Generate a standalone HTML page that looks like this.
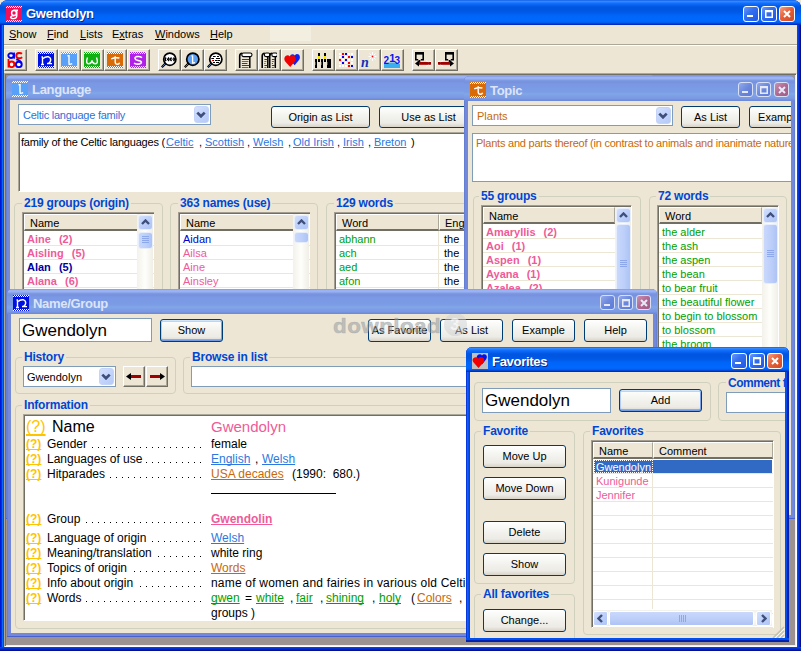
<!DOCTYPE html><html><head><meta charset="utf-8"><style>
*{margin:0;padding:0;box-sizing:border-box}
html,body{width:801px;height:651px;overflow:hidden;background:#EDE6D5;font-family:"Liberation Sans",sans-serif;font-size:11px;color:#000}
.a{position:absolute}
.t0{white-space:nowrap;line-height:1;text-decoration-skip-ink:none}
u{text-decoration:underline}

.xb{position:absolute;width:16px;height:16px;border:1px solid #fff;border-radius:3px;background:linear-gradient(135deg,#6A98F8 0,#3470F0 40%,#1E56E6 100%)}
.xb.cl{background:linear-gradient(135deg,#F4A080 0,#E5603A 45%,#D04A22 100%)}
.ib{position:absolute;width:15px;height:15px;border:1px solid #D8E0F6;border-radius:3px;background:linear-gradient(135deg,#93AAEA 0,#6B88DD 50%,#5E7BD8 100%)}
.ib.cl{background:linear-gradient(135deg,#C990B0 0,#B06A92 50%,#A05A86 100%)}
.btn{position:absolute;border:1px solid #003C74;border-radius:3px;background:linear-gradient(#FFFFFF 0,#F4F4F0 40%,#ECEBE5 80%,#D8D3C8 100%);text-align:center;font-size:12px;white-space:nowrap;line-height:1}
.grp{position:absolute;border:1px solid #D0D0BF;border-radius:4px}
.gt{position:absolute;background:#EDE6D5;color:#0046D5;font-weight:bold;font-size:12px;padding:0 2px;white-space:nowrap;line-height:1;letter-spacing:-0.2px}
.ed{position:absolute;background:#fff;border:1px solid #7F9DB9;white-space:nowrap;overflow:hidden;line-height:1}
.sk{position:absolute;background:#fff;border:1px solid;border-color:#ACA899 #fff #fff #ACA899;box-shadow:inset 1px 1px 0 #716F64;overflow:hidden;white-space:nowrap;line-height:1}
.win{position:absolute;overflow:hidden;border-radius:7px 7px 0 0}
.inner{position:absolute;left:0;top:0;width:801px;height:651px}
</style></head><body>
<div class="a" style="left:0;top:0;width:801px;height:651px;background:#0048E8;border-radius:8px 8px 0 0;overflow:hidden">
<div class="a" style="left:0px;top:0px;width:4px;height:651px;background:linear-gradient(90deg,#0018D0 0 1px,#0030E0 1px 2px,#0868FF 2px 3px,#0048E8 3px 4px)"></div>
<div class="a" style="left:797px;top:0px;width:4px;height:651px;background:linear-gradient(90deg,#0048F0 0 1px,#0038E0 1px 2px,#0020B8 2px 3px,#000C90 3px 4px)"></div>
<div class="a" style="left:0px;top:647px;width:801px;height:4px;background:linear-gradient(#0040F0 0 1px,#0030D8 1px 2px,#0020B8 2px 3px,#001090 3px 4px)"></div>
<div class="a" style="left:0px;top:0px;width:801px;height:25px;background:linear-gradient(#0050E0 0px,#3C8AFF 1px,#2A84FF 2px,#1272FF 3px,#0A62F2 5px,#0056E0 7px,#0056E0 10px,#005CEC 13px,#0066FA 16px,#0068FF 21px,#005AE8 23px,#0030C4 24px,#0028C0 25px)"></div>
<div class="a" style="left:4px;top:25px;width:793px;height:622px;background:#EDE6D5"></div>
</div>
<svg class="a" style="left:6px;top:6px" width="16" height="16" viewBox="0 0 16 16"><rect width="16" height="16" fill="#F0105A"/><g shape-rendering="crispEdges"><rect x="0" y="1" width="1" height="1" fill="#fff"/><rect x="0" y="15" width="1" height="1" fill="#fff"/><rect x="1" y="0" width="1" height="1" fill="#fff"/><rect x="1" y="14" width="1" height="1" fill="#fff"/><rect x="2" y="1" width="1" height="1" fill="#fff"/><rect x="2" y="15" width="1" height="1" fill="#fff"/><rect x="3" y="0" width="1" height="1" fill="#fff"/><rect x="3" y="14" width="1" height="1" fill="#fff"/><rect x="4" y="1" width="1" height="1" fill="#fff"/><rect x="4" y="15" width="1" height="1" fill="#fff"/><rect x="5" y="0" width="1" height="1" fill="#fff"/><rect x="5" y="14" width="1" height="1" fill="#fff"/><rect x="6" y="1" width="1" height="1" fill="#fff"/><rect x="6" y="15" width="1" height="1" fill="#fff"/><rect x="7" y="0" width="1" height="1" fill="#fff"/><rect x="7" y="14" width="1" height="1" fill="#fff"/><rect x="8" y="1" width="1" height="1" fill="#fff"/><rect x="8" y="15" width="1" height="1" fill="#fff"/><rect x="9" y="0" width="1" height="1" fill="#fff"/><rect x="9" y="14" width="1" height="1" fill="#fff"/><rect x="10" y="1" width="1" height="1" fill="#fff"/><rect x="10" y="15" width="1" height="1" fill="#fff"/><rect x="11" y="0" width="1" height="1" fill="#fff"/><rect x="11" y="14" width="1" height="1" fill="#fff"/><rect x="12" y="1" width="1" height="1" fill="#fff"/><rect x="12" y="15" width="1" height="1" fill="#fff"/><rect x="13" y="0" width="1" height="1" fill="#fff"/><rect x="13" y="14" width="1" height="1" fill="#fff"/><rect x="14" y="1" width="1" height="1" fill="#fff"/><rect x="14" y="15" width="1" height="1" fill="#fff"/><rect x="15" y="0" width="1" height="1" fill="#fff"/><rect x="15" y="14" width="1" height="1" fill="#fff"/></g><ellipse cx="8" cy="7" rx="2.4" ry="2.5" stroke="#fff" stroke-width="1.4" fill="none"/><path d="M7.5 4.3H12M10.8 4.3V9.5Q10.8 12.6 7.8 12.6Q5 12.6 4.6 11.2Q5.2 9.6 8.2 9.6" stroke="#fff" stroke-width="1.4" fill="none"/></svg>
<div class="a t0" style="left:26px;top:7px;color:#fff;font-weight:bold;font-size:13px;letter-spacing:-0.25px;text-shadow:1px 1px 0 #0A2A8A">Gwendolyn</div>
<div class="a" style="left:0;top:0"><div class="xb" style="left:743px;top:6px"><svg class="a" style="left:3px;top:8px" width="6" height="3"><rect width="6" height="2" fill="#fff"/></svg></div><div class="xb" style="left:761px;top:6px"><svg class="a" style="left:3px;top:3px" width="8" height="8" viewBox="0 0 8 8"><path d="M0.75 1.5H7.25V7.25H0.75Z" fill="none" stroke="#fff" stroke-width="1.5"/><rect x="0" y="0" width="8" height="2" fill="#fff"/></svg></div><div class="xb cl" style="left:779px;top:6px"><svg class="a" style="left:3px;top:3px" width="8" height="8" viewBox="0 0 8 8"><path d="M1 1L7 7M7 1L1 7" stroke="#fff" stroke-width="2"/></svg></div></div>
<div class="a t0" style="left:9px;top:29px;font-size:11px"><u>S</u>how</div>
<div class="a t0" style="left:47px;top:29px;font-size:11px"><u>F</u>ind</div>
<div class="a t0" style="left:80px;top:29px;font-size:11px"><u>L</u>ists</div>
<div class="a t0" style="left:112px;top:29px;font-size:11px">E<u>x</u>tras</div>
<div class="a t0" style="left:155px;top:29px;font-size:11px"><u>W</u>indows</div>
<div class="a t0" style="left:210px;top:29px;font-size:11px"><u>H</u>elp</div>
<div class="a" style="left:270px;top:26px;width:41px;height:15px;background:#F2EEE0"></div>
<div class="a" style="left:4px;top:44px;width:793px;height:1px;background:#ACA899"></div>
<div class="a" style="left:4px;top:45px;width:793px;height:1px;background:#fff"></div>
<div class="a" style="left:4px;top:49px;width:23px;height:22px;border:1px solid;border-color:#fff #716F64 #716F64 #fff;box-shadow:inset -1px -1px 0 #ACA899"></div><svg class="a" style="left:7px;top:52px" width="16" height="16" viewBox="0 0 16 16"><ellipse cx="4" cy="3.6" rx="2.7" ry="2.4" stroke="#0000F0" stroke-width="1.9" fill="#fff"/><path d="M7.2 0.6V6.8" stroke="#0000F0" stroke-width="1.5"/><path d="M15 1.8Q13.8 0.8 12 1Q9.2 1.3 9.3 3.8Q9.5 6.4 12 6.3Q13.8 6.2 15.2 5.2" stroke="#F00000" stroke-width="1.9" fill="none"/><path d="M1.5 7V15.6" stroke="#F00000" stroke-width="1.8"/><ellipse cx="4.6" cy="12.3" rx="2.7" ry="2.8" stroke="#F00000" stroke-width="1.9" fill="#fff"/><ellipse cx="11.8" cy="12.4" rx="2.9" ry="2.7" stroke="#0000F0" stroke-width="1.9" fill="#fff"/><path d="M14.5 11.4Q13.8 8.6 9.2 7.4" stroke="#0000F0" stroke-width="1.8" fill="none"/></svg>
<div class="a" style="left:35px;top:49px;width:23px;height:22px;border:1px solid;border-color:#fff #716F64 #716F64 #fff;box-shadow:inset -1px -1px 0 #ACA899"></div><svg class="a" style="left:38px;top:52px" width="16" height="16" viewBox="0 0 16 16"><rect width="16" height="16" fill="#0010E0"/><g shape-rendering="crispEdges"><rect x="0" y="1" width="1" height="1" fill="#fff"/><rect x="0" y="15" width="1" height="1" fill="#fff"/><rect x="1" y="0" width="1" height="1" fill="#fff"/><rect x="1" y="14" width="1" height="1" fill="#fff"/><rect x="2" y="1" width="1" height="1" fill="#fff"/><rect x="2" y="15" width="1" height="1" fill="#fff"/><rect x="3" y="0" width="1" height="1" fill="#fff"/><rect x="3" y="14" width="1" height="1" fill="#fff"/><rect x="4" y="1" width="1" height="1" fill="#fff"/><rect x="4" y="15" width="1" height="1" fill="#fff"/><rect x="5" y="0" width="1" height="1" fill="#fff"/><rect x="5" y="14" width="1" height="1" fill="#fff"/><rect x="6" y="1" width="1" height="1" fill="#fff"/><rect x="6" y="15" width="1" height="1" fill="#fff"/><rect x="7" y="0" width="1" height="1" fill="#fff"/><rect x="7" y="14" width="1" height="1" fill="#fff"/><rect x="8" y="1" width="1" height="1" fill="#fff"/><rect x="8" y="15" width="1" height="1" fill="#fff"/><rect x="9" y="0" width="1" height="1" fill="#fff"/><rect x="9" y="14" width="1" height="1" fill="#fff"/><rect x="10" y="1" width="1" height="1" fill="#fff"/><rect x="10" y="15" width="1" height="1" fill="#fff"/><rect x="11" y="0" width="1" height="1" fill="#fff"/><rect x="11" y="14" width="1" height="1" fill="#fff"/><rect x="12" y="1" width="1" height="1" fill="#fff"/><rect x="12" y="15" width="1" height="1" fill="#fff"/><rect x="13" y="0" width="1" height="1" fill="#fff"/><rect x="13" y="14" width="1" height="1" fill="#fff"/><rect x="14" y="1" width="1" height="1" fill="#fff"/><rect x="14" y="15" width="1" height="1" fill="#fff"/><rect x="15" y="0" width="1" height="1" fill="#fff"/><rect x="15" y="14" width="1" height="1" fill="#fff"/></g><path d="M4.5 12.5V5.5M3 12.5h3M3.5 5h1.5" stroke="#fff" stroke-width="1.4" fill="none"/><path d="M5 6.5Q7.5 4.2 10.5 4.8Q13.2 5.6 12.6 8.6Q12 11.6 9 11.6H14" stroke="#fff" stroke-width="1.4" fill="none"/></svg>
<div class="a" style="left:58px;top:49px;width:23px;height:22px;border:1px solid;border-color:#fff #716F64 #716F64 #fff;box-shadow:inset -1px -1px 0 #ACA899"></div><svg class="a" style="left:61px;top:52px" width="16" height="16" viewBox="0 0 16 16"><rect width="16" height="16" fill="#58A0F8"/><g shape-rendering="crispEdges"><rect x="0" y="1" width="1" height="1" fill="#fff"/><rect x="0" y="15" width="1" height="1" fill="#fff"/><rect x="1" y="0" width="1" height="1" fill="#fff"/><rect x="1" y="14" width="1" height="1" fill="#fff"/><rect x="2" y="1" width="1" height="1" fill="#fff"/><rect x="2" y="15" width="1" height="1" fill="#fff"/><rect x="3" y="0" width="1" height="1" fill="#fff"/><rect x="3" y="14" width="1" height="1" fill="#fff"/><rect x="4" y="1" width="1" height="1" fill="#fff"/><rect x="4" y="15" width="1" height="1" fill="#fff"/><rect x="5" y="0" width="1" height="1" fill="#fff"/><rect x="5" y="14" width="1" height="1" fill="#fff"/><rect x="6" y="1" width="1" height="1" fill="#fff"/><rect x="6" y="15" width="1" height="1" fill="#fff"/><rect x="7" y="0" width="1" height="1" fill="#fff"/><rect x="7" y="14" width="1" height="1" fill="#fff"/><rect x="8" y="1" width="1" height="1" fill="#fff"/><rect x="8" y="15" width="1" height="1" fill="#fff"/><rect x="9" y="0" width="1" height="1" fill="#fff"/><rect x="9" y="14" width="1" height="1" fill="#fff"/><rect x="10" y="1" width="1" height="1" fill="#fff"/><rect x="10" y="15" width="1" height="1" fill="#fff"/><rect x="11" y="0" width="1" height="1" fill="#fff"/><rect x="11" y="14" width="1" height="1" fill="#fff"/><rect x="12" y="1" width="1" height="1" fill="#fff"/><rect x="12" y="15" width="1" height="1" fill="#fff"/><rect x="13" y="0" width="1" height="1" fill="#fff"/><rect x="13" y="14" width="1" height="1" fill="#fff"/><rect x="14" y="1" width="1" height="1" fill="#fff"/><rect x="14" y="15" width="1" height="1" fill="#fff"/><rect x="15" y="0" width="1" height="1" fill="#fff"/><rect x="15" y="14" width="1" height="1" fill="#fff"/></g><path d="M8 3.5V11.5M6.5 3.8h2.2M7.5 12.2Q9.5 12.4 11.2 11.6" stroke="#fff" stroke-width="1.4" fill="none"/></svg>
<div class="a" style="left:81px;top:49px;width:23px;height:22px;border:1px solid;border-color:#fff #716F64 #716F64 #fff;box-shadow:inset -1px -1px 0 #ACA899"></div><svg class="a" style="left:84px;top:52px" width="16" height="16" viewBox="0 0 16 16"><rect width="16" height="16" fill="#10B010"/><g shape-rendering="crispEdges"><rect x="0" y="1" width="1" height="1" fill="#fff"/><rect x="0" y="15" width="1" height="1" fill="#fff"/><rect x="1" y="0" width="1" height="1" fill="#fff"/><rect x="1" y="14" width="1" height="1" fill="#fff"/><rect x="2" y="1" width="1" height="1" fill="#fff"/><rect x="2" y="15" width="1" height="1" fill="#fff"/><rect x="3" y="0" width="1" height="1" fill="#fff"/><rect x="3" y="14" width="1" height="1" fill="#fff"/><rect x="4" y="1" width="1" height="1" fill="#fff"/><rect x="4" y="15" width="1" height="1" fill="#fff"/><rect x="5" y="0" width="1" height="1" fill="#fff"/><rect x="5" y="14" width="1" height="1" fill="#fff"/><rect x="6" y="1" width="1" height="1" fill="#fff"/><rect x="6" y="15" width="1" height="1" fill="#fff"/><rect x="7" y="0" width="1" height="1" fill="#fff"/><rect x="7" y="14" width="1" height="1" fill="#fff"/><rect x="8" y="1" width="1" height="1" fill="#fff"/><rect x="8" y="15" width="1" height="1" fill="#fff"/><rect x="9" y="0" width="1" height="1" fill="#fff"/><rect x="9" y="14" width="1" height="1" fill="#fff"/><rect x="10" y="1" width="1" height="1" fill="#fff"/><rect x="10" y="15" width="1" height="1" fill="#fff"/><rect x="11" y="0" width="1" height="1" fill="#fff"/><rect x="11" y="14" width="1" height="1" fill="#fff"/><rect x="12" y="1" width="1" height="1" fill="#fff"/><rect x="12" y="15" width="1" height="1" fill="#fff"/><rect x="13" y="0" width="1" height="1" fill="#fff"/><rect x="13" y="14" width="1" height="1" fill="#fff"/><rect x="14" y="1" width="1" height="1" fill="#fff"/><rect x="14" y="15" width="1" height="1" fill="#fff"/><rect x="15" y="0" width="1" height="1" fill="#fff"/><rect x="15" y="14" width="1" height="1" fill="#fff"/></g><path d="M3.5 5.5Q1.3 11.5 4.6 11.8Q7.3 12 8 8.3Q8.7 12 11.4 11.8Q14.7 11.5 12.5 5.5" stroke="#fff" stroke-width="1.4" fill="none"/></svg>
<div class="a" style="left:104px;top:49px;width:23px;height:22px;border:1px solid;border-color:#fff #716F64 #716F64 #fff;box-shadow:inset -1px -1px 0 #ACA899"></div><svg class="a" style="left:107px;top:52px" width="16" height="16" viewBox="0 0 16 16"><rect width="16" height="16" fill="#D86A08"/><g shape-rendering="crispEdges"><rect x="0" y="1" width="1" height="1" fill="#fff"/><rect x="0" y="15" width="1" height="1" fill="#fff"/><rect x="1" y="0" width="1" height="1" fill="#fff"/><rect x="1" y="14" width="1" height="1" fill="#fff"/><rect x="2" y="1" width="1" height="1" fill="#fff"/><rect x="2" y="15" width="1" height="1" fill="#fff"/><rect x="3" y="0" width="1" height="1" fill="#fff"/><rect x="3" y="14" width="1" height="1" fill="#fff"/><rect x="4" y="1" width="1" height="1" fill="#fff"/><rect x="4" y="15" width="1" height="1" fill="#fff"/><rect x="5" y="0" width="1" height="1" fill="#fff"/><rect x="5" y="14" width="1" height="1" fill="#fff"/><rect x="6" y="1" width="1" height="1" fill="#fff"/><rect x="6" y="15" width="1" height="1" fill="#fff"/><rect x="7" y="0" width="1" height="1" fill="#fff"/><rect x="7" y="14" width="1" height="1" fill="#fff"/><rect x="8" y="1" width="1" height="1" fill="#fff"/><rect x="8" y="15" width="1" height="1" fill="#fff"/><rect x="9" y="0" width="1" height="1" fill="#fff"/><rect x="9" y="14" width="1" height="1" fill="#fff"/><rect x="10" y="1" width="1" height="1" fill="#fff"/><rect x="10" y="15" width="1" height="1" fill="#fff"/><rect x="11" y="0" width="1" height="1" fill="#fff"/><rect x="11" y="14" width="1" height="1" fill="#fff"/><rect x="12" y="1" width="1" height="1" fill="#fff"/><rect x="12" y="15" width="1" height="1" fill="#fff"/><rect x="13" y="0" width="1" height="1" fill="#fff"/><rect x="13" y="14" width="1" height="1" fill="#fff"/><rect x="14" y="1" width="1" height="1" fill="#fff"/><rect x="14" y="15" width="1" height="1" fill="#fff"/><rect x="15" y="0" width="1" height="1" fill="#fff"/><rect x="15" y="14" width="1" height="1" fill="#fff"/></g><path d="M8.2 4.2V10Q8.2 12.3 10.4 12.3Q12.2 12.2 12.6 10.8M4.2 6.8Q8 5.2 12.4 6" stroke="#fff" stroke-width="1.4" fill="none"/></svg>
<div class="a" style="left:127px;top:49px;width:23px;height:22px;border:1px solid;border-color:#fff #716F64 #716F64 #fff;box-shadow:inset -1px -1px 0 #ACA899"></div><svg class="a" style="left:130px;top:52px" width="16" height="16" viewBox="0 0 16 16"><rect width="16" height="16" fill="#B020E8"/><g shape-rendering="crispEdges"><rect x="0" y="1" width="1" height="1" fill="#fff"/><rect x="0" y="15" width="1" height="1" fill="#fff"/><rect x="1" y="0" width="1" height="1" fill="#fff"/><rect x="1" y="14" width="1" height="1" fill="#fff"/><rect x="2" y="1" width="1" height="1" fill="#fff"/><rect x="2" y="15" width="1" height="1" fill="#fff"/><rect x="3" y="0" width="1" height="1" fill="#fff"/><rect x="3" y="14" width="1" height="1" fill="#fff"/><rect x="4" y="1" width="1" height="1" fill="#fff"/><rect x="4" y="15" width="1" height="1" fill="#fff"/><rect x="5" y="0" width="1" height="1" fill="#fff"/><rect x="5" y="14" width="1" height="1" fill="#fff"/><rect x="6" y="1" width="1" height="1" fill="#fff"/><rect x="6" y="15" width="1" height="1" fill="#fff"/><rect x="7" y="0" width="1" height="1" fill="#fff"/><rect x="7" y="14" width="1" height="1" fill="#fff"/><rect x="8" y="1" width="1" height="1" fill="#fff"/><rect x="8" y="15" width="1" height="1" fill="#fff"/><rect x="9" y="0" width="1" height="1" fill="#fff"/><rect x="9" y="14" width="1" height="1" fill="#fff"/><rect x="10" y="1" width="1" height="1" fill="#fff"/><rect x="10" y="15" width="1" height="1" fill="#fff"/><rect x="11" y="0" width="1" height="1" fill="#fff"/><rect x="11" y="14" width="1" height="1" fill="#fff"/><rect x="12" y="1" width="1" height="1" fill="#fff"/><rect x="12" y="15" width="1" height="1" fill="#fff"/><rect x="13" y="0" width="1" height="1" fill="#fff"/><rect x="13" y="14" width="1" height="1" fill="#fff"/><rect x="14" y="1" width="1" height="1" fill="#fff"/><rect x="14" y="15" width="1" height="1" fill="#fff"/><rect x="15" y="0" width="1" height="1" fill="#fff"/><rect x="15" y="14" width="1" height="1" fill="#fff"/></g><path d="M12 5.6Q9.8 4.1 6.8 4.6Q3.8 5.6 5.8 7.6Q7.8 8.6 10.2 9Q12.4 10 10.6 11.6Q8 12.8 4 11.2" stroke="#fff" stroke-width="1.6" fill="none"/></svg>
<div class="a" style="left:158px;top:49px;width:23px;height:22px;border:1px solid;border-color:#fff #716F64 #716F64 #fff;box-shadow:inset -1px -1px 0 #ACA899"></div><svg class="a" style="left:161px;top:52px" width="16" height="16" viewBox="0 0 16 16"><line x1="0.8" y1="15.2" x2="4.6" y2="11.4" stroke="#000" stroke-width="2.2"/><line x1="1.3" y1="14.7" x2="4" y2="12" stroke="#7A9AE0" stroke-width="0.7"/><circle cx="8.8" cy="7.2" r="6.1" fill="#fff" stroke="#000" stroke-width="1.7"/><path d="M5.2 5.6Q3.2 7.2 5.2 8.8M7 5.6Q9 7.2 7 8.8M10.6 5.6Q8.6 7.2 10.6 8.8M12.4 5.6Q14.4 7.2 12.4 8.8" fill="none" stroke="#000" stroke-width="1.5"/><path d="M6 7.2h1M11.5 7.2h1" stroke="#000" stroke-width="1.4"/></svg>
<div class="a" style="left:181px;top:49px;width:23px;height:22px;border:1px solid;border-color:#fff #716F64 #716F64 #fff;box-shadow:inset -1px -1px 0 #ACA899"></div><svg class="a" style="left:184px;top:52px" width="16" height="16" viewBox="0 0 16 16"><line x1="0.8" y1="15.2" x2="4.6" y2="11.4" stroke="#000" stroke-width="2.2"/><line x1="1.3" y1="14.7" x2="4" y2="12" stroke="#7A9AE0" stroke-width="0.7"/><circle cx="8.8" cy="7.2" r="6.1" fill="#5BA0F5" stroke="#000" stroke-width="1.7"/><path d="M8.6 3.6V10.6M7.4 3.8h1.6M8 11Q9.6 11.3 11 10.5" fill="none" stroke="#fff" stroke-width="1.3"/></svg>
<div class="a" style="left:204px;top:49px;width:23px;height:22px;border:1px solid;border-color:#fff #716F64 #716F64 #fff;box-shadow:inset -1px -1px 0 #ACA899"></div><svg class="a" style="left:207px;top:52px" width="16" height="16" viewBox="0 0 16 16"><line x1="0.8" y1="15.2" x2="4.6" y2="11.4" stroke="#000" stroke-width="2.2"/><line x1="1.3" y1="14.7" x2="4" y2="12" stroke="#7A9AE0" stroke-width="0.7"/><circle cx="8.8" cy="7.2" r="6.1" fill="#fff" stroke="#000" stroke-width="1.7"/><g shape-rendering="crispEdges"><path d="M6 4.5h2M10 4.5h2M5 6.5h2M9 6.5h4M6 8.5h1M8 8.5h2M11 8.5h2M6 10.5h2M9 10.5h3" stroke="#000" stroke-width="1"/><path d="M8 4.5h1M4 6.5h1M10 8.5h1M5 8.5h1" stroke="#F00" stroke-width="1"/></g></svg>
<div class="a" style="left:235px;top:49px;width:23px;height:22px;border:1px solid;border-color:#fff #716F64 #716F64 #fff;box-shadow:inset -1px -1px 0 #ACA899"></div><svg class="a" style="left:238px;top:52px" width="16" height="16" viewBox="0 0 16 16"><path d="M1.7 16V4Q1.7 1.2 4.3 1.2" fill="none" stroke="#000" stroke-width="1.6"/><rect x="3.8" y="1" width="10.2" height="3.6" rx="1.8" fill="#fff" stroke="#000" stroke-width="1.1"/><path d="M11.8 4.6V16" stroke="#000" stroke-width="1.5"/><path d="M3.9 7.5h7.5M3.9 11.5h5.5M3.9 13.5h7.5" stroke="#1A2CF0" stroke-width="1"/><path d="M3.9 9.5h6.5M3.9 15.5h6.5" stroke="#F0206A" stroke-width="1"/></svg>
<div class="a" style="left:258px;top:49px;width:23px;height:22px;border:1px solid;border-color:#fff #716F64 #716F64 #fff;box-shadow:inset -1px -1px 0 #ACA899"></div><svg class="a" style="left:261px;top:52px" width="16" height="16" viewBox="0 0 16 16"><path d="M1.2 16V4Q1.2 1.2 3.8 1.2" fill="none" stroke="#000" stroke-width="1.6"/><rect x="3.3" y="1" width="5.7" height="3.6" rx="1.8" fill="#fff" stroke="#000" stroke-width="1.1"/><path d="M6.8 4.6V16" stroke="#000" stroke-width="1.5"/><path d="M3.4 7.5h3M3.4 11.5h1M3.4 13.5h3" stroke="#1A2CF0" stroke-width="1"/><path d="M3.4 9.5h2M3.4 15.5h2" stroke="#F0206A" stroke-width="1"/><path d="M8.7 16V4Q8.7 1.2 11.3 1.2" fill="none" stroke="#000" stroke-width="1.6"/><rect x="10.8" y="1" width="5.7" height="3.6" rx="1.8" fill="#fff" stroke="#000" stroke-width="1.1"/><path d="M14.3 4.6V16" stroke="#000" stroke-width="1.5"/><path d="M10.9 7.5h3M10.9 11.5h1M10.9 13.5h3" stroke="#1A2CF0" stroke-width="1"/><path d="M10.9 9.5h2M10.9 15.5h2" stroke="#F0206A" stroke-width="1"/></svg>
<div class="a" style="left:281px;top:49px;width:23px;height:22px;border:1px solid;border-color:#fff #716F64 #716F64 #fff;box-shadow:inset -1px -1px 0 #ACA899"></div><svg class="a" style="left:284px;top:52px" width="16" height="16" viewBox="0 0 16 16"><path d="M10.6 13.2 L6.4 8.2 Q4.8 5.2 6.8 2.8 Q9 1.2 10.8 3.4 Q12.6 1.2 14.8 2.6 Q16.8 4.8 15.2 7.8 Z" fill="#1020F0"/><path d="M6.2 15 L1 9.2 Q-0.6 6 1.6 4 Q4 2.4 6 4.6 Q8 2.4 10.4 4 Q12.6 6 11.2 9.2 Z" fill="#F00000"/></svg>
<div class="a" style="left:312px;top:49px;width:23px;height:22px;border:1px solid;border-color:#fff #716F64 #716F64 #fff;box-shadow:inset -1px -1px 0 #ACA899"></div><svg class="a" style="left:315px;top:53px" width="16" height="16" viewBox="0 0 16 16" shape-rendering="crispEdges"><rect x="3" y="0" width="2" height="3" fill="#000"/><rect x="9" y="0" width="2" height="3" fill="#000"/><rect x="3" y="3" width="2" height="3" fill="#F5E600"/><rect x="9" y="3" width="2" height="3" fill="#F5E600"/><rect x="0" y="6" width="2" height="3" fill="#000"/><rect x="3" y="6" width="2" height="3" fill="#000"/><rect x="6" y="6" width="2" height="3" fill="#000"/><rect x="9" y="6" width="2" height="3" fill="#000"/><rect x="12" y="6" width="2" height="3" fill="#000"/><rect x="14" y="6" width="2" height="3" fill="#000"/><rect x="0" y="9" width="1" height="3" fill="#F00"/><rect x="1" y="9" width="1" height="3" fill="#000"/><rect x="6" y="9" width="1" height="3" fill="#F00"/><rect x="7" y="9" width="1" height="3" fill="#000"/><rect x="12" y="9" width="1" height="3" fill="#F00"/><rect x="13" y="9" width="1" height="3" fill="#000"/><rect x="14" y="9" width="2" height="3" fill="#000"/><rect x="0" y="12" width="2" height="3" fill="#000"/><rect x="6" y="12" width="2" height="3" fill="#000"/><rect x="12" y="12" width="2" height="3" fill="#000"/><rect x="14" y="12" width="2" height="3" fill="#000"/></svg>
<div class="a" style="left:335px;top:49px;width:23px;height:22px;border:1px solid;border-color:#fff #716F64 #716F64 #fff;box-shadow:inset -1px -1px 0 #ACA899"></div><svg class="a" style="left:338px;top:52px" width="16" height="16" viewBox="0 0 16 16" shape-rendering="crispEdges"><rect x="1" y="1" width="2" height="2" fill="#fff"/><rect x="4" y="1" width="2" height="2" fill="#F00"/><rect x="7" y="1" width="2" height="2" fill="#00F"/><rect x="10" y="1" width="2" height="2" fill="#fff"/><rect x="13" y="1" width="2" height="2" fill="#fff"/><rect x="1" y="4" width="2" height="2" fill="#fff"/><rect x="4" y="4" width="2" height="2" fill="#00F"/><rect x="7" y="4" width="2" height="2" fill="#fff"/><rect x="10" y="4" width="2" height="2" fill="#F00"/><rect x="13" y="4" width="2" height="2" fill="#00F"/><rect x="1" y="7" width="2" height="2" fill="#F00"/><rect x="4" y="7" width="2" height="2" fill="#fff"/><rect x="7" y="7" width="2" height="2" fill="#00F"/><rect x="10" y="7" width="2" height="2" fill="#fff"/><rect x="13" y="7" width="2" height="2" fill="#fff"/><rect x="1" y="10" width="2" height="2" fill="#fff"/><rect x="4" y="10" width="2" height="2" fill="#00F"/><rect x="7" y="10" width="2" height="2" fill="#fff"/><rect x="10" y="10" width="2" height="2" fill="#F00"/><rect x="13" y="10" width="2" height="2" fill="#fff"/><rect x="1" y="13" width="2" height="2" fill="#fff"/><rect x="4" y="13" width="2" height="2" fill="#fff"/><rect x="7" y="13" width="2" height="2" fill="#fff"/><rect x="10" y="13" width="2" height="2" fill="#F00"/><rect x="13" y="13" width="2" height="2" fill="#00F"/></svg>
<div class="a" style="left:358px;top:49px;width:23px;height:22px;border:1px solid;border-color:#fff #716F64 #716F64 #fff;box-shadow:inset -1px -1px 0 #ACA899"></div><svg class="a" style="left:361px;top:52px" width="16" height="16" viewBox="0 0 16 16"><path d="M8.5 1.5L14.5 7.5M14.5 1.5L8.5 7.5M11.5 0V9M7.5 4.5H15.5" stroke="#fff" stroke-width="0.9"/><circle cx="11.5" cy="4.5" r="1.4" fill="#F5D800"/><circle cx="11.5" cy="4.5" r="0.7" fill="#F00"/><text x="0" y="15" font-family="Liberation Serif" font-weight="bold" font-style="italic" font-size="14" fill="#1030B8">n</text></svg>
<div class="a" style="left:381px;top:49px;width:23px;height:22px;border:1px solid;border-color:#fff #716F64 #716F64 #fff;box-shadow:inset -1px -1px 0 #ACA899"></div><svg class="a" style="left:384px;top:52px" width="16" height="16" viewBox="0 0 16 16"><path d="M0 12h4.5V10.5h7V12H16V16H0z" fill="#3AAEF0"/><text x="-0.5" y="11.5" font-family="Liberation Sans" font-weight="bold" font-size="10" fill="#0818F0">2</text><text x="5.2" y="9.5" font-family="Liberation Sans" font-weight="bold" font-size="11" fill="#0818F0">1</text><text x="10.5" y="12" font-family="Liberation Sans" font-weight="bold" font-size="10" fill="#0818F0">3</text></svg>
<div class="a" style="left:412px;top:49px;width:23px;height:22px;border:1px solid;border-color:#fff #716F64 #716F64 #fff;box-shadow:inset -1px -1px 0 #ACA899"></div><svg class="a" style="left:415px;top:52px" width="16" height="16" viewBox="0 0 16 16"><g><path d="M0.8 8.5V1.2H8.2V8.5M0 7.8H3.2M5.8 7.8H9M4.5 8V10.5" fill="none" stroke="#000" stroke-width="1.6"/><rect x="0" y="0" width="9" height="2.6" fill="#000"/><rect x="3" y="10" width="13" height="2.8" fill="#A00000"/><path d="M0 11.4L4 8.2V14.6Z" fill="#000"/><path d="M11 8.5l2.5 1.3M11 14.3l2.5-1.3M14 9l2 .6M14 13.8l2-.6" stroke="#fff" stroke-width="0.9"/></g></svg>
<div class="a" style="left:435px;top:49px;width:23px;height:22px;border:1px solid;border-color:#fff #716F64 #716F64 #fff;box-shadow:inset -1px -1px 0 #ACA899"></div><svg class="a" style="left:438px;top:52px" width="16" height="16" viewBox="0 0 16 16"><g transform="translate(16,0) scale(-1,1)"><path d="M0.8 8.5V1.2H8.2V8.5M0 7.8H3.2M5.8 7.8H9M4.5 8V10.5" fill="none" stroke="#000" stroke-width="1.6"/><rect x="0" y="0" width="9" height="2.6" fill="#000"/><rect x="3" y="10" width="13" height="2.8" fill="#A00000"/><path d="M0 11.4L4 8.2V14.6Z" fill="#000"/><path d="M11 8.5l2.5 1.3M11 14.3l2.5-1.3M14 9l2 .6M14 13.8l2-.6" stroke="#fff" stroke-width="0.9"/></g></svg>
<div class="a" style="left:4px;top:73px;width:793px;height:574px;background:#9C9292;border-top:1px solid #ACA899;border-left:1px solid #ACA899;border-right:1px solid #fff;border-bottom:1px solid #fff;box-shadow:inset -1px -1px 0 #F1EFE2"></div>
<div class="a" style="left:5px;top:74px;width:791px;height:1px;background:#716F64"></div>
<div class="a" style="left:5px;top:74px;width:1px;height:572px;background:#716F64"></div>
<div class="win" style="left:6px;top:75px;width:650px;height:444px;background:#7488DA;border-radius:5px 5px 0 0">
<div class="a" style="left:0px;top:0px;width:1px;height:444px;background:#6580D2"></div>
<div class="a" style="left:649px;top:0px;width:1px;height:444px;background:#6580D2"></div>
<div class="a" style="left:0px;top:443px;width:650px;height:1px;background:#4A60CC"></div>
<div class="a" style="left:0px;top:0px;width:650px;height:25px;border-radius:5px 5px 0 0;background:linear-gradient(#7590E0 0px,#9BB3F2 1px,#9AB2F0 3px,#7E9CE6 4px,#7890DC 6px,#7A98E4 8px,#7C9CE6 16px,#80A8E8 18px,#7E9EE6 20px,#7A98E2 23px,#6E8ADA 24px,#6E8ADA 25px)"></div>
<div class="a" style="left:4px;top:25px;width:642px;height:415px;background:#EDE6D5;overflow:hidden">
<div class="inner" style="left:-10px;top:-100px">
<div class="ed" style="left:18px;top:104px;width:193px;height:21px"><div class="a t0" style="left:4px;top:5px;color:#2C72D8;font-size:11px;letter-spacing:-0.25px">Celtic language family</div></div>
<div class="a" style="left:194px;top:106px;width:15px;height:17px;border:1px solid #C4D4F8;border-radius:3px;background:linear-gradient(135deg,#D4E1FD,#C2D4FB 50%,#B6CAF7)"></div>
<svg class="a" style="left:196px;top:111px" width="10" height="7" viewBox="0 0 10 7"><path d="M1.3 1.6L5 5.3L8.7 1.6" fill="none" stroke="#3D4F7A" stroke-width="2.7"/></svg>
<div class="btn" style="left:271px;top:106px;width:99px;height:22px;padding-top:5px;font-size:11px;">Origin as List</div>
<div class="btn" style="left:379px;top:106px;width:99px;height:22px;padding-top:5px;font-size:11px;">Use as List</div>
<div class="a" style="left:18px;top:132px;width:620px;height:60px;background:#fff;border:1px solid;border-color:#ACA899 #fff #fff #ACA899;box-shadow:inset 1px 1px 0 #716F64"></div>
<div class="a t0" style="left:21px;top:137px;font-size:11px;letter-spacing:-0.2px">family of the Celtic languages (</div>
<div class="a t0" style="left:166px;top:137px;color:#2C78E0;font-size:11px;text-decoration:underline">Celtic</div>
<div class="a t0" style="left:199px;top:137px;font-size:11px;letter-spacing:-0.2px">,</div>
<div class="a t0" style="left:205px;top:137px;color:#2C78E0;font-size:11px;text-decoration:underline">Scottish</div>
<div class="a t0" style="left:247px;top:137px;font-size:11px;letter-spacing:-0.2px">,</div>
<div class="a t0" style="left:253px;top:137px;color:#2C78E0;font-size:11px;text-decoration:underline">Welsh</div>
<div class="a t0" style="left:288px;top:137px;font-size:11px;letter-spacing:-0.2px">,</div>
<div class="a t0" style="left:293px;top:137px;color:#2C78E0;font-size:11px;text-decoration:underline">Old Irish</div>
<div class="a t0" style="left:337px;top:137px;font-size:11px;letter-spacing:-0.2px">,</div>
<div class="a t0" style="left:343px;top:137px;color:#2C78E0;font-size:11px;text-decoration:underline">Irish</div>
<div class="a t0" style="left:368px;top:137px;font-size:11px;letter-spacing:-0.2px">,</div>
<div class="a t0" style="left:374px;top:137px;color:#2C78E0;font-size:11px;text-decoration:underline">Breton</div>
<div class="a t0" style="left:411px;top:137px;font-size:11px;letter-spacing:-0.2px">)</div>
<div class="a" style="left:14px;top:203px;width:149px;height:100px;border:1px solid #D0D0BF;border-radius:4px"></div>
<div class="gt" style="left:22px;top:197px">219 groups (origin)</div>
<div class="a" style="left:170px;top:203px;width:148px;height:100px;border:1px solid #D0D0BF;border-radius:4px"></div>
<div class="gt" style="left:178px;top:197px">363 names (use)</div>
<div class="a" style="left:326px;top:203px;width:300px;height:100px;border:1px solid #D0D0BF;border-radius:4px"></div>
<div class="gt" style="left:334px;top:197px">129 words</div>
<div class="a" style="left:22px;top:212px;width:132px;height:90px;background:#fff;border-top:1px solid #A39C91;border-left:1px solid #A39C91;box-shadow:inset 1px 1px 0 #716F64"></div>
<div class="a" style="left:24px;top:214px;width:115px;height:17px;background:#EDE6D5;border-top:1px solid #fff;border-left:1px solid #fff;border-bottom:2px solid #716F64;border-right:1px solid #ACA899"></div>
<div class="a t0" style="left:30px;top:218px;font-size:11px">Name</div>
<div class="a" style="left:24px;top:245px;width:130px;height:1px;background:#ECE6D5"></div>
<div class="a" style="left:24px;top:259px;width:130px;height:1px;background:#ECE6D5"></div>
<div class="a" style="left:24px;top:273px;width:130px;height:1px;background:#ECE6D5"></div>
<div class="a" style="left:24px;top:287px;width:130px;height:1px;background:#ECE6D5"></div>
<div class="a" style="left:24px;top:301px;width:130px;height:1px;background:#ECE6D5"></div>
<div class="a t0" style="left:27px;top:234px;color:#EE5B98;font-size:11px;font-weight:bold;">Aine&nbsp;<span style="margin-left:5px"></span>(2)</div>
<div class="a t0" style="left:27px;top:248px;color:#EE5B98;font-size:11px;font-weight:bold;">Aisling&nbsp;<span style="margin-left:5px"></span>(5)</div>
<div class="a t0" style="left:27px;top:262px;color:#0000A0;font-size:11px;font-weight:bold;">Alan&nbsp;<span style="margin-left:5px"></span>(5)</div>
<div class="a t0" style="left:27px;top:276px;color:#EE5B98;font-size:11px;font-weight:bold;">Alana&nbsp;<span style="margin-left:5px"></span>(6)</div>
<div class="a" style="left:137px;top:214px;width:16px;height:80px;background:linear-gradient(90deg,#F3F1EA,#FEFEFB 50%,#F0EEE6)"></div>
<div class="a" style="left:138px;top:215px;width:15px;height:15px;border:1px solid #E6EDFD;border-radius:3px;background:linear-gradient(135deg,#D2DFFD,#BACDF9 60%,#AFC4F5)"></div>
<svg class="a" style="left:141px;top:219px" width="9" height="6" viewBox="0 0 9 6"><path d="M1 5L4.5 1.5L8 5" fill="none" stroke="#3D4F7A" stroke-width="2.4"/></svg>
<div class="a" style="left:138px;top:232px;width:15px;height:17px;border:1px solid #E6EDFD;border-radius:3px;background:linear-gradient(90deg,#C9D8FC,#BBCEF9 60%,#AEC3F4)"></div>
<div class="a" style="left:142px;top:236px;width:7px;height:1px;background:#8DA8EA"></div>
<div class="a" style="left:142px;top:238px;width:7px;height:1px;background:#8DA8EA"></div>
<div class="a" style="left:142px;top:240px;width:7px;height:1px;background:#8DA8EA"></div>
<div class="a" style="left:142px;top:242px;width:7px;height:1px;background:#8DA8EA"></div>
<div class="a" style="left:178px;top:212px;width:132px;height:90px;background:#fff;border-top:1px solid #A39C91;border-left:1px solid #A39C91;box-shadow:inset 1px 1px 0 #716F64"></div>
<div class="a" style="left:180px;top:214px;width:115px;height:17px;background:#EDE6D5;border-top:1px solid #fff;border-left:1px solid #fff;border-bottom:2px solid #716F64;border-right:1px solid #ACA899"></div>
<div class="a t0" style="left:186px;top:218px;font-size:11px">Name</div>
<div class="a" style="left:180px;top:245px;width:130px;height:1px;background:#ECE6D5"></div>
<div class="a" style="left:180px;top:259px;width:130px;height:1px;background:#ECE6D5"></div>
<div class="a" style="left:180px;top:273px;width:130px;height:1px;background:#ECE6D5"></div>
<div class="a" style="left:180px;top:287px;width:130px;height:1px;background:#ECE6D5"></div>
<div class="a" style="left:180px;top:301px;width:130px;height:1px;background:#ECE6D5"></div>
<div class="a t0" style="left:183px;top:234px;color:#0000D0;font-size:11px;">Aidan</div>
<div class="a t0" style="left:183px;top:248px;color:#EE5B98;font-size:11px;">Ailsa</div>
<div class="a t0" style="left:183px;top:262px;color:#EE5B98;font-size:11px;">Aine</div>
<div class="a t0" style="left:183px;top:276px;color:#EE5B98;font-size:11px;">Ainsley</div>
<div class="a" style="left:293px;top:214px;width:16px;height:80px;background:linear-gradient(90deg,#F3F1EA,#FEFEFB 50%,#F0EEE6)"></div>
<div class="a" style="left:294px;top:215px;width:15px;height:15px;border:1px solid #E6EDFD;border-radius:3px;background:linear-gradient(135deg,#D2DFFD,#BACDF9 60%,#AFC4F5)"></div>
<svg class="a" style="left:297px;top:219px" width="9" height="6" viewBox="0 0 9 6"><path d="M1 5L4.5 1.5L8 5" fill="none" stroke="#3D4F7A" stroke-width="2.4"/></svg>
<div class="a" style="left:294px;top:232px;width:15px;height:11px;border:1px solid #E6EDFD;border-radius:3px;background:linear-gradient(90deg,#C9D8FC,#BBCEF9 60%,#AEC3F4)"></div>
<div class="a" style="left:334px;top:212px;width:300px;height:90px;background:#fff;border-top:1px solid #A39C91;border-left:1px solid #A39C91;box-shadow:inset 1px 1px 0 #716F64"></div>
<div class="a" style="left:336px;top:214px;width:103px;height:17px;background:#EDE6D5;border-top:1px solid #fff;border-left:1px solid #fff;border-bottom:2px solid #716F64;border-right:1px solid #ACA899"></div>
<div class="a t0" style="left:342px;top:218px;font-size:11px">Word</div>
<div class="a" style="left:439px;top:214px;width:150px;height:17px;background:#EDE6D5;border-top:1px solid #fff;border-left:1px solid #fff;border-bottom:2px solid #716F64;border-right:1px solid #ACA899"></div>
<div class="a t0" style="left:445px;top:218px;font-size:11px">English</div>
<div class="a" style="left:336px;top:245px;width:298px;height:1px;background:#ECE6D5"></div>
<div class="a" style="left:336px;top:259px;width:298px;height:1px;background:#ECE6D5"></div>
<div class="a" style="left:336px;top:273px;width:298px;height:1px;background:#ECE6D5"></div>
<div class="a" style="left:336px;top:287px;width:298px;height:1px;background:#ECE6D5"></div>
<div class="a" style="left:336px;top:301px;width:298px;height:1px;background:#ECE6D5"></div>
<div class="a t0" style="left:339px;top:234px;color:#00A000;font-size:11px;">abhann</div>
<div class="a t0" style="left:339px;top:248px;color:#00A000;font-size:11px;">ach</div>
<div class="a t0" style="left:339px;top:262px;color:#00A000;font-size:11px;">aed</div>
<div class="a t0" style="left:339px;top:276px;color:#00A000;font-size:11px;">afon</div>
<div class="a" style="left:438px;top:231px;width:1px;height:60px;background:#ECE6D5"></div>
<div class="a t0" style="left:444px;top:234px;font-size:11px">the</div>
<div class="a t0" style="left:444px;top:248px;font-size:11px">the</div>
<div class="a t0" style="left:444px;top:262px;font-size:11px">the</div>
<div class="a t0" style="left:444px;top:276px;font-size:11px">the</div>
</div></div>
<svg class="a" style="left:6px;top:6px" width="16" height="16" viewBox="0 0 16 16"><rect width="16" height="16" fill="#58A0F8"/><g shape-rendering="crispEdges"><rect x="0" y="1" width="1" height="1" fill="#fff"/><rect x="0" y="15" width="1" height="1" fill="#fff"/><rect x="1" y="0" width="1" height="1" fill="#fff"/><rect x="1" y="14" width="1" height="1" fill="#fff"/><rect x="2" y="1" width="1" height="1" fill="#fff"/><rect x="2" y="15" width="1" height="1" fill="#fff"/><rect x="3" y="0" width="1" height="1" fill="#fff"/><rect x="3" y="14" width="1" height="1" fill="#fff"/><rect x="4" y="1" width="1" height="1" fill="#fff"/><rect x="4" y="15" width="1" height="1" fill="#fff"/><rect x="5" y="0" width="1" height="1" fill="#fff"/><rect x="5" y="14" width="1" height="1" fill="#fff"/><rect x="6" y="1" width="1" height="1" fill="#fff"/><rect x="6" y="15" width="1" height="1" fill="#fff"/><rect x="7" y="0" width="1" height="1" fill="#fff"/><rect x="7" y="14" width="1" height="1" fill="#fff"/><rect x="8" y="1" width="1" height="1" fill="#fff"/><rect x="8" y="15" width="1" height="1" fill="#fff"/><rect x="9" y="0" width="1" height="1" fill="#fff"/><rect x="9" y="14" width="1" height="1" fill="#fff"/><rect x="10" y="1" width="1" height="1" fill="#fff"/><rect x="10" y="15" width="1" height="1" fill="#fff"/><rect x="11" y="0" width="1" height="1" fill="#fff"/><rect x="11" y="14" width="1" height="1" fill="#fff"/><rect x="12" y="1" width="1" height="1" fill="#fff"/><rect x="12" y="15" width="1" height="1" fill="#fff"/><rect x="13" y="0" width="1" height="1" fill="#fff"/><rect x="13" y="14" width="1" height="1" fill="#fff"/><rect x="14" y="1" width="1" height="1" fill="#fff"/><rect x="14" y="15" width="1" height="1" fill="#fff"/><rect x="15" y="0" width="1" height="1" fill="#fff"/><rect x="15" y="14" width="1" height="1" fill="#fff"/></g><path d="M8 3.5V11.5M6.5 3.8h2.2M7.5 12.2Q9.5 12.4 11.2 11.6" stroke="#fff" stroke-width="1.4" fill="none"/></svg>
<div class="a t0" style="left:26px;top:8px;color:#DCE4F8;font-weight:bold;font-size:13px;letter-spacing:-0.3px">Language</div>
<div class="ib" style="left:593px;top:6px"><svg class="a" style="left:3px;top:8px" width="6" height="3"><rect width="6" height="2" fill="#E6EAF8"/></svg></div><div class="ib" style="left:611px;top:6px"><svg class="a" style="left:3px;top:3px" width="8" height="8" viewBox="0 0 8 8"><path d="M0.75 1.5H7.25V7.25H0.75Z" fill="none" stroke="#E6EAF8" stroke-width="1.5"/><rect x="0" y="0" width="8" height="2" fill="#E6EAF8"/></svg></div><div class="ib cl" style="left:629px;top:6px"><svg class="a" style="left:3px;top:3px" width="8" height="8" viewBox="0 0 8 8"><path d="M1 1L7 7M7 1L1 7" stroke="#E6EAF8" stroke-width="2"/></svg></div>
</div>
<div class="win" style="left:464px;top:76px;width:331px;height:443px;background:#7488DA;border-radius:5px 5px 0 0">
<div class="a" style="left:0px;top:0px;width:1px;height:443px;background:#6580D2"></div>
<div class="a" style="left:330px;top:0px;width:1px;height:443px;background:#6580D2"></div>
<div class="a" style="left:0px;top:442px;width:331px;height:1px;background:#4A60CC"></div>
<div class="a" style="left:0px;top:0px;width:331px;height:25px;border-radius:5px 5px 0 0;background:linear-gradient(#7590E0 0px,#9BB3F2 1px,#9AB2F0 3px,#7E9CE6 4px,#7890DC 6px,#7A98E4 8px,#7C9CE6 16px,#80A8E8 18px,#7E9EE6 20px,#7A98E2 23px,#6E8ADA 24px,#6E8ADA 25px)"></div>
<div class="a" style="left:4px;top:25px;width:323px;height:414px;background:#EDE6D5;overflow:hidden">
<div class="inner" style="left:-468px;top:-101px">
<div class="ed" style="left:472px;top:105px;width:201px;height:21px"><div class="a t0" style="left:4px;top:5px;color:#C8680A;font-size:11px;">Plants</div></div>
<div class="a" style="left:656px;top:107px;width:15px;height:17px;border:1px solid #C4D4F8;border-radius:3px;background:linear-gradient(135deg,#D4E1FD,#C2D4FB 50%,#B6CAF7)"></div>
<svg class="a" style="left:658px;top:112px" width="10" height="7" viewBox="0 0 10 7"><path d="M1.3 1.6L5 5.3L8.7 1.6" fill="none" stroke="#3D4F7A" stroke-width="2.7"/></svg>
<div class="btn" style="left:681px;top:106px;width:59px;height:22px;padding-top:5px;font-size:11px;">As List</div>
<div class="btn" style="left:749px;top:106px;width:61px;height:22px;padding-top:5px;font-size:11px;">Example</div>
<div class="a" style="left:472px;top:133px;width:330px;height:49px;background:#fff;border:1px solid #7F9DB9"></div>
<div class="a t0" style="left:476px;top:138px;color:#C8680A;font-size:11px;letter-spacing:-0.23px">Plants and parts thereof (in contrast to animals and inanimate nature)</div>
<div class="a" style="left:473px;top:196px;width:168px;height:120px;border:1px solid #D0D0BF;border-radius:4px"></div>
<div class="gt" style="left:479px;top:190px">55 groups</div>
<div class="a" style="left:649px;top:196px;width:138px;height:160px;border:1px solid #D0D0BF;border-radius:4px"></div>
<div class="gt" style="left:656px;top:190px">72 words</div>
<div class="a" style="left:481px;top:205px;width:151px;height:120px;background:#fff;border-top:1px solid #A39C91;border-left:1px solid #A39C91;box-shadow:inset 1px 1px 0 #716F64;border-right:1px solid #fff"></div>
<div class="a" style="left:483px;top:207px;width:132px;height:17px;background:#EDE6D5;border-top:1px solid #fff;border-left:1px solid #fff;border-bottom:2px solid #716F64;border-right:1px solid #ACA899"></div>
<div class="a t0" style="left:489px;top:211px;font-size:11px">Name</div>
<div class="a" style="left:483px;top:238px;width:132px;height:1px;background:#ECE6D5"></div>
<div class="a" style="left:483px;top:252px;width:132px;height:1px;background:#ECE6D5"></div>
<div class="a" style="left:483px;top:266px;width:132px;height:1px;background:#ECE6D5"></div>
<div class="a" style="left:483px;top:280px;width:132px;height:1px;background:#ECE6D5"></div>
<div class="a" style="left:483px;top:294px;width:132px;height:1px;background:#ECE6D5"></div>
<div class="a" style="left:483px;top:308px;width:132px;height:1px;background:#ECE6D5"></div>
<div class="a" style="left:483px;top:322px;width:132px;height:1px;background:#ECE6D5"></div>
<div class="a" style="left:483px;top:336px;width:132px;height:1px;background:#ECE6D5"></div>
<div class="a t0" style="left:486px;top:227px;color:#EE5B98;font-size:11px;font-weight:bold;">Amaryllis&nbsp;<span style="margin-left:5px"></span>(2)</div>
<div class="a t0" style="left:486px;top:241px;color:#EE5B98;font-size:11px;font-weight:bold;">Aoi&nbsp;<span style="margin-left:5px"></span>(1)</div>
<div class="a t0" style="left:486px;top:255px;color:#EE5B98;font-size:11px;font-weight:bold;">Aspen&nbsp;<span style="margin-left:5px"></span>(1)</div>
<div class="a t0" style="left:486px;top:269px;color:#EE5B98;font-size:11px;font-weight:bold;">Ayana&nbsp;<span style="margin-left:5px"></span>(1)</div>
<div class="a t0" style="left:486px;top:283px;color:#EE5B98;font-size:11px;font-weight:bold;">Azalea&nbsp;<span style="margin-left:5px"></span>(2)</div>
<div class="a" style="left:615px;top:207px;width:16px;height:120px;background:linear-gradient(90deg,#F3F1EA,#FEFEFB 50%,#F0EEE6)"></div>
<div class="a" style="left:616px;top:208px;width:15px;height:15px;border:1px solid #E6EDFD;border-radius:3px;background:linear-gradient(135deg,#D2DFFD,#BACDF9 60%,#AFC4F5)"></div>
<svg class="a" style="left:619px;top:212px" width="9" height="6" viewBox="0 0 9 6"><path d="M1 5L4.5 1.5L8 5" fill="none" stroke="#3D4F7A" stroke-width="2.4"/></svg>
<div class="a" style="left:616px;top:224px;width:15px;height:80px;border:1px solid #E6EDFD;border-radius:3px;background:linear-gradient(90deg,#C9D8FC,#BBCEF9 60%,#AEC3F4)"></div>
<div class="a" style="left:620px;top:260px;width:7px;height:1px;background:#8DA8EA"></div>
<div class="a" style="left:620px;top:262px;width:7px;height:1px;background:#8DA8EA"></div>
<div class="a" style="left:620px;top:264px;width:7px;height:1px;background:#8DA8EA"></div>
<div class="a" style="left:620px;top:266px;width:7px;height:1px;background:#8DA8EA"></div>
<div class="a" style="left:657px;top:205px;width:122px;height:160px;background:#fff;border-top:1px solid #A39C91;border-left:1px solid #A39C91;box-shadow:inset 1px 1px 0 #716F64;border-right:1px solid #fff"></div>
<div class="a" style="left:659px;top:207px;width:103px;height:17px;background:#EDE6D5;border-top:1px solid #fff;border-left:1px solid #fff;border-bottom:2px solid #716F64;border-right:1px solid #ACA899"></div>
<div class="a t0" style="left:665px;top:211px;font-size:11px">Word</div>
<div class="a" style="left:659px;top:238px;width:103px;height:1px;background:#ECE6D5"></div>
<div class="a" style="left:659px;top:252px;width:103px;height:1px;background:#ECE6D5"></div>
<div class="a" style="left:659px;top:266px;width:103px;height:1px;background:#ECE6D5"></div>
<div class="a" style="left:659px;top:280px;width:103px;height:1px;background:#ECE6D5"></div>
<div class="a" style="left:659px;top:294px;width:103px;height:1px;background:#ECE6D5"></div>
<div class="a" style="left:659px;top:308px;width:103px;height:1px;background:#ECE6D5"></div>
<div class="a" style="left:659px;top:322px;width:103px;height:1px;background:#ECE6D5"></div>
<div class="a" style="left:659px;top:336px;width:103px;height:1px;background:#ECE6D5"></div>
<div class="a" style="left:659px;top:350px;width:103px;height:1px;background:#ECE6D5"></div>
<div class="a" style="left:659px;top:364px;width:103px;height:1px;background:#ECE6D5"></div>
<div class="a t0" style="left:662px;top:227px;color:#00A000;font-size:11px;">the alder</div>
<div class="a t0" style="left:662px;top:241px;color:#00A000;font-size:11px;">the ash</div>
<div class="a t0" style="left:662px;top:255px;color:#00A000;font-size:11px;">the aspen</div>
<div class="a t0" style="left:662px;top:269px;color:#00A000;font-size:11px;">the bean</div>
<div class="a t0" style="left:662px;top:283px;color:#00A000;font-size:11px;">to bear fruit</div>
<div class="a t0" style="left:662px;top:297px;color:#00A000;font-size:11px;">the beautiful flower</div>
<div class="a t0" style="left:662px;top:311px;color:#00A000;font-size:11px;">to begin to blossom</div>
<div class="a t0" style="left:662px;top:325px;color:#00A000;font-size:11px;">to blossom</div>
<div class="a t0" style="left:662px;top:339px;color:#00A000;font-size:11px;">the broom</div>
<div class="a" style="left:762px;top:207px;width:16px;height:150px;background:linear-gradient(90deg,#F3F1EA,#FEFEFB 50%,#F0EEE6)"></div>
<div class="a" style="left:763px;top:208px;width:15px;height:15px;border:1px solid #E6EDFD;border-radius:3px;background:linear-gradient(135deg,#D2DFFD,#BACDF9 60%,#AFC4F5)"></div>
<svg class="a" style="left:766px;top:212px" width="9" height="6" viewBox="0 0 9 6"><path d="M1 5L4.5 1.5L8 5" fill="none" stroke="#3D4F7A" stroke-width="2.4"/></svg>
<div class="a" style="left:763px;top:224px;width:15px;height:60px;border:1px solid #E6EDFD;border-radius:3px;background:linear-gradient(90deg,#C9D8FC,#BBCEF9 60%,#AEC3F4)"></div>
<div class="a" style="left:767px;top:250px;width:7px;height:1px;background:#8DA8EA"></div>
<div class="a" style="left:767px;top:252px;width:7px;height:1px;background:#8DA8EA"></div>
<div class="a" style="left:767px;top:254px;width:7px;height:1px;background:#8DA8EA"></div>
<div class="a" style="left:767px;top:256px;width:7px;height:1px;background:#8DA8EA"></div>
</div></div>
<svg class="a" style="left:6px;top:6px" width="16" height="16" viewBox="0 0 16 16"><rect width="16" height="16" fill="#D86A08"/><g shape-rendering="crispEdges"><rect x="0" y="1" width="1" height="1" fill="#fff"/><rect x="0" y="15" width="1" height="1" fill="#fff"/><rect x="1" y="0" width="1" height="1" fill="#fff"/><rect x="1" y="14" width="1" height="1" fill="#fff"/><rect x="2" y="1" width="1" height="1" fill="#fff"/><rect x="2" y="15" width="1" height="1" fill="#fff"/><rect x="3" y="0" width="1" height="1" fill="#fff"/><rect x="3" y="14" width="1" height="1" fill="#fff"/><rect x="4" y="1" width="1" height="1" fill="#fff"/><rect x="4" y="15" width="1" height="1" fill="#fff"/><rect x="5" y="0" width="1" height="1" fill="#fff"/><rect x="5" y="14" width="1" height="1" fill="#fff"/><rect x="6" y="1" width="1" height="1" fill="#fff"/><rect x="6" y="15" width="1" height="1" fill="#fff"/><rect x="7" y="0" width="1" height="1" fill="#fff"/><rect x="7" y="14" width="1" height="1" fill="#fff"/><rect x="8" y="1" width="1" height="1" fill="#fff"/><rect x="8" y="15" width="1" height="1" fill="#fff"/><rect x="9" y="0" width="1" height="1" fill="#fff"/><rect x="9" y="14" width="1" height="1" fill="#fff"/><rect x="10" y="1" width="1" height="1" fill="#fff"/><rect x="10" y="15" width="1" height="1" fill="#fff"/><rect x="11" y="0" width="1" height="1" fill="#fff"/><rect x="11" y="14" width="1" height="1" fill="#fff"/><rect x="12" y="1" width="1" height="1" fill="#fff"/><rect x="12" y="15" width="1" height="1" fill="#fff"/><rect x="13" y="0" width="1" height="1" fill="#fff"/><rect x="13" y="14" width="1" height="1" fill="#fff"/><rect x="14" y="1" width="1" height="1" fill="#fff"/><rect x="14" y="15" width="1" height="1" fill="#fff"/><rect x="15" y="0" width="1" height="1" fill="#fff"/><rect x="15" y="14" width="1" height="1" fill="#fff"/></g><path d="M8.2 4.2V10Q8.2 12.3 10.4 12.3Q12.2 12.2 12.6 10.8M4.2 6.8Q8 5.2 12.4 6" stroke="#fff" stroke-width="1.4" fill="none"/></svg>
<div class="a t0" style="left:26px;top:8px;color:#DCE4F8;font-weight:bold;font-size:13px;letter-spacing:-0.3px">Topic</div>
<div class="ib" style="left:274px;top:6px"><svg class="a" style="left:3px;top:8px" width="6" height="3"><rect width="6" height="2" fill="#E6EAF8"/></svg></div><div class="ib" style="left:292px;top:6px"><svg class="a" style="left:3px;top:3px" width="8" height="8" viewBox="0 0 8 8"><path d="M0.75 1.5H7.25V7.25H0.75Z" fill="none" stroke="#E6EAF8" stroke-width="1.5"/><rect x="0" y="0" width="8" height="2" fill="#E6EAF8"/></svg></div><div class="ib cl" style="left:310px;top:6px"><svg class="a" style="left:3px;top:3px" width="8" height="8" viewBox="0 0 8 8"><path d="M1 1L7 7M7 1L1 7" stroke="#E6EAF8" stroke-width="2"/></svg></div>
</div>
<div class="win" style="left:7px;top:289px;width:650px;height:348px;background:#7488DA;border-radius:5px 5px 0 0">
<div class="a" style="left:0px;top:0px;width:1px;height:348px;background:#6580D2"></div>
<div class="a" style="left:649px;top:0px;width:1px;height:348px;background:#6580D2"></div>
<div class="a" style="left:0px;top:347px;width:650px;height:1px;background:#4A60CC"></div>
<div class="a" style="left:0px;top:0px;width:650px;height:25px;border-radius:5px 5px 0 0;background:linear-gradient(#7590E0 0px,#9BB3F2 1px,#9AB2F0 3px,#7E9CE6 4px,#7890DC 6px,#7A98E4 8px,#7C9CE6 16px,#80A8E8 18px,#7E9EE6 20px,#7A98E2 23px,#6E8ADA 24px,#6E8ADA 25px)"></div>
<div class="a" style="left:4px;top:25px;width:642px;height:319px;background:#EDE6D5;overflow:hidden">
<div class="inner" style="left:-11px;top:-314px">
<div class="a" style="left:19px;top:318px;width:133px;height:24px;background:#fff;border:1px solid #7F9DB9"></div>
<div class="a t0" style="left:22px;top:322px;font-size:17px">Gwendolyn</div>
<div class="btn" style="left:160px;top:319px;width:63px;height:23px;padding-top:5px;font-size:11px;box-shadow:inset 0 1px 0 #CEE7FF,inset 0 -1px 0 #6F9AE8,inset 1px 0 0 #B0CCF8,inset -1px 0 0 #7BA2E8,inset 0 2px 0 #BCD4F6,inset 0 -2px 0 #89ADE4">Show</div>
<div class="btn" style="left:368px;top:319px;width:63px;height:23px;padding-top:5px;font-size:11px;">As Favorite</div>
<div class="btn" style="left:440px;top:319px;width:63px;height:23px;padding-top:5px;font-size:11px;">As List</div>
<div class="btn" style="left:512px;top:319px;width:63px;height:23px;padding-top:5px;font-size:11px;">Example</div>
<div class="btn" style="left:584px;top:319px;width:63px;height:23px;padding-top:5px;font-size:11px;">Help</div>
<div class="a" style="left:444px;top:313px;width:23px;height:23px;background:rgba(205,208,210,0.5);border-radius:50%"></div>
<div class="a t0" style="left:450px;top:316px;font-size:17px;font-weight:bold;color:rgba(255,255,255,0.65)">3</div>
<div class="a t0" style="left:333px;top:316px;font-size:20px;font-weight:bold;letter-spacing:0.4px;color:rgba(150,156,160,0.55);-webkit-text-stroke:0.5px rgba(150,156,160,0.55);transform:scaleX(1.12);transform-origin:0 0">download</div>
<div class="a" style="left:15px;top:357px;width:161px;height:37px;border:1px solid #D0D0BF;border-radius:4px"></div>
<div class="gt" style="left:22px;top:351px">History</div>
<div class="ed" style="left:23px;top:366px;width:93px;height:21px"><div class="a t0" style="left:3px;top:5px;color:#000;font-size:11px;">Gwendolyn</div></div>
<div class="a" style="left:99px;top:368px;width:15px;height:17px;border:1px solid #C4D4F8;border-radius:3px;background:linear-gradient(135deg,#D4E1FD,#C2D4FB 50%,#B6CAF7)"></div>
<svg class="a" style="left:101px;top:373px" width="10" height="7" viewBox="0 0 10 7"><path d="M1.3 1.6L5 5.3L8.7 1.6" fill="none" stroke="#3D4F7A" stroke-width="2.7"/></svg>
<div class="a" style="left:123px;top:366px;width:22px;height:21px;border:1px solid;border-color:#fff #716F64 #716F64 #fff;box-shadow:inset -1px -1px 0 #ACA899"></div>
<svg class="a" style="left:126px;top:371px" width="16" height="10" viewBox="0 0 16 10"><rect x="4" y="4" width="11" height="3" fill="#A00000"/><path d="M0 5.5L5 2V9Z" fill="#000"/></svg>
<div class="a" style="left:146px;top:366px;width:22px;height:21px;border:1px solid;border-color:#fff #716F64 #716F64 #fff;box-shadow:inset -1px -1px 0 #ACA899"></div>
<svg class="a" style="left:149px;top:371px" width="16" height="10" viewBox="0 0 16 10"><rect x="1" y="4" width="11" height="3" fill="#A00000"/><path d="M16 5.5L11 2V9Z" fill="#000"/></svg>
<div class="a" style="left:183px;top:357px;width:470px;height:37px;border:1px solid #D0D0BF;border-radius:4px"></div>
<div class="gt" style="left:190px;top:351px">Browse in list</div>
<div class="a" style="left:191px;top:366px;width:460px;height:21px;background:#fff;border:1px solid #7F9DB9"></div>
<div class="a" style="left:15px;top:405px;width:633px;height:224px;border:1px solid #D0D0BF;border-radius:4px"></div>
<div class="gt" style="left:22px;top:399px">Information</div>
<div class="a" style="left:23px;top:414px;width:617px;height:207px;background:#fff;border:1px solid;border-color:#ACA899 #fff #fff #ACA899;box-shadow:inset 1px 1px 0 #716F64"></div>
<div class="a t0" style="left:26px;top:419px;font-size:16px;color:#FFC400;text-decoration:underline;text-underline-offset:2px;text-decoration-thickness:1.5px">(?)</div>
<div class="a t0" style="left:52px;top:419px;font-size:16px">Name</div>
<div class="a t0" style="left:211px;top:419px;font-size:15px;color:#EE5B98">Gwendolyn</div>
<div class="a t0" style="left:26px;top:438px;font-size:12px;color:#FFC400;text-decoration:underline;font-weight:bold">(?)</div>
<div class="a t0" style="left:47px;top:438px;font-size:12px">Gender</div>
<div class="a" style="left:92px;top:447px;width:109px;height:1px;background:repeating-linear-gradient(to left,#000 0 1px,transparent 1px 6px)"></div>
<div class="a t0" style="left:211px;top:438px;font-size:12px;color:#000;">female</div>
<div class="a t0" style="left:26px;top:453px;font-size:12px;color:#FFC400;text-decoration:underline;font-weight:bold">(?)</div>
<div class="a t0" style="left:47px;top:453px;font-size:12px">Languages of use</div>
<div class="a" style="left:146px;top:462px;width:55px;height:1px;background:repeating-linear-gradient(to left,#000 0 1px,transparent 1px 6px)"></div>
<div class="a t0" style="left:211px;top:453px;font-size:12px;color:#2C78E0;text-decoration:underline;">English</div>
<div class="a t0" style="left:255px;top:453px;font-size:12px;color:#000;">,</div>
<div class="a t0" style="left:262px;top:453px;font-size:12px;color:#2C78E0;text-decoration:underline;">Welsh</div>
<div class="a t0" style="left:26px;top:468px;font-size:12px;color:#FFC400;text-decoration:underline;font-weight:bold">(?)</div>
<div class="a t0" style="left:47px;top:468px;font-size:12px">Hitparades</div>
<div class="a" style="left:110px;top:477px;width:91px;height:1px;background:repeating-linear-gradient(to left,#000 0 1px,transparent 1px 6px)"></div>
<div class="a t0" style="left:211px;top:468px;font-size:12px;color:#C8680A;text-decoration:underline;">USA decades</div>
<div class="a t0" style="left:292px;top:468px;font-size:12px;color:#000;">(1990:&nbsp; 680.)</div>
<div class="a t0" style="left:26px;top:513px;font-size:12px;color:#FFC400;text-decoration:underline;font-weight:bold">(?)</div>
<div class="a t0" style="left:47px;top:513px;font-size:12px">Group</div>
<div class="a" style="left:86px;top:522px;width:115px;height:1px;background:repeating-linear-gradient(to left,#000 0 1px,transparent 1px 6px)"></div>
<div class="a t0" style="left:211px;top:513px;font-size:12px;color:#EE5B98;text-decoration:underline;font-weight:bold;">Gwendolin</div>
<div class="a t0" style="left:26px;top:532px;font-size:12px;color:#FFC400;text-decoration:underline;font-weight:bold">(?)</div>
<div class="a t0" style="left:47px;top:532px;font-size:12px">Language of origin</div>
<div class="a" style="left:152px;top:541px;width:49px;height:1px;background:repeating-linear-gradient(to left,#000 0 1px,transparent 1px 6px)"></div>
<div class="a t0" style="left:211px;top:532px;font-size:12px;color:#2C78E0;text-decoration:underline;">Welsh</div>
<div class="a t0" style="left:26px;top:547px;font-size:12px;color:#FFC400;text-decoration:underline;font-weight:bold">(?)</div>
<div class="a t0" style="left:47px;top:547px;font-size:12px">Meaning/translation</div>
<div class="a" style="left:158px;top:556px;width:43px;height:1px;background:repeating-linear-gradient(to left,#000 0 1px,transparent 1px 6px)"></div>
<div class="a t0" style="left:211px;top:547px;font-size:12px;color:#000;">white ring</div>
<div class="a t0" style="left:26px;top:562px;font-size:12px;color:#FFC400;text-decoration:underline;font-weight:bold">(?)</div>
<div class="a t0" style="left:47px;top:562px;font-size:12px">Topics of origin</div>
<div class="a" style="left:134px;top:571px;width:67px;height:1px;background:repeating-linear-gradient(to left,#000 0 1px,transparent 1px 6px)"></div>
<div class="a t0" style="left:211px;top:562px;font-size:12px;color:#C8680A;text-decoration:underline;">Words</div>
<div class="a t0" style="left:26px;top:577px;font-size:12px;color:#FFC400;text-decoration:underline;font-weight:bold">(?)</div>
<div class="a t0" style="left:47px;top:577px;font-size:12px">Info about origin</div>
<div class="a" style="left:140px;top:586px;width:61px;height:1px;background:repeating-linear-gradient(to left,#000 0 1px,transparent 1px 6px)"></div>
<div class="a t0" style="left:211px;top:577px;font-size:12px;color:#000;letter-spacing:0.2px;">name of women and fairies in various old Celtic legends</div>
<div class="a t0" style="left:26px;top:592px;font-size:12px;color:#FFC400;text-decoration:underline;font-weight:bold">(?)</div>
<div class="a t0" style="left:47px;top:592px;font-size:12px">Words</div>
<div class="a" style="left:86px;top:601px;width:115px;height:1px;background:repeating-linear-gradient(to left,#000 0 1px,transparent 1px 6px)"></div>
<div class="a t0" style="left:211px;top:592px;font-size:12px;color:#00A000;text-decoration:underline;">gwen</div>
<div class="a t0" style="left:245px;top:592px;font-size:12px;color:#000;">=</div>
<div class="a t0" style="left:256px;top:592px;font-size:12px;color:#00A000;text-decoration:underline;">white</div>
<div class="a t0" style="left:290px;top:592px;font-size:12px;color:#000;">,</div>
<div class="a t0" style="left:296px;top:592px;font-size:12px;color:#00A000;text-decoration:underline;">fair</div>
<div class="a t0" style="left:320px;top:592px;font-size:12px;color:#000;">,</div>
<div class="a t0" style="left:326px;top:592px;font-size:12px;color:#00A000;text-decoration:underline;">shining</div>
<div class="a t0" style="left:372px;top:592px;font-size:12px;color:#000;">,</div>
<div class="a t0" style="left:379px;top:592px;font-size:12px;color:#00A000;text-decoration:underline;">holy</div>
<div class="a t0" style="left:411px;top:592px;font-size:12px;color:#000;">(</div>
<div class="a t0" style="left:417px;top:592px;font-size:12px;color:#C8680A;text-decoration:underline;">Colors</div>
<div class="a t0" style="left:459px;top:592px;font-size:12px;color:#000;">,</div>
<div class="a t0" style="left:211px;top:607px;font-size:12px">groups )</div>
<div class="a" style="left:211px;top:493px;width:125px;height:1px;background:#000"></div>
</div></div>
<svg class="a" style="left:6px;top:6px" width="16" height="16" viewBox="0 0 16 16"><rect width="16" height="16" fill="#0010E0"/><g shape-rendering="crispEdges"><rect x="0" y="1" width="1" height="1" fill="#fff"/><rect x="0" y="15" width="1" height="1" fill="#fff"/><rect x="1" y="0" width="1" height="1" fill="#fff"/><rect x="1" y="14" width="1" height="1" fill="#fff"/><rect x="2" y="1" width="1" height="1" fill="#fff"/><rect x="2" y="15" width="1" height="1" fill="#fff"/><rect x="3" y="0" width="1" height="1" fill="#fff"/><rect x="3" y="14" width="1" height="1" fill="#fff"/><rect x="4" y="1" width="1" height="1" fill="#fff"/><rect x="4" y="15" width="1" height="1" fill="#fff"/><rect x="5" y="0" width="1" height="1" fill="#fff"/><rect x="5" y="14" width="1" height="1" fill="#fff"/><rect x="6" y="1" width="1" height="1" fill="#fff"/><rect x="6" y="15" width="1" height="1" fill="#fff"/><rect x="7" y="0" width="1" height="1" fill="#fff"/><rect x="7" y="14" width="1" height="1" fill="#fff"/><rect x="8" y="1" width="1" height="1" fill="#fff"/><rect x="8" y="15" width="1" height="1" fill="#fff"/><rect x="9" y="0" width="1" height="1" fill="#fff"/><rect x="9" y="14" width="1" height="1" fill="#fff"/><rect x="10" y="1" width="1" height="1" fill="#fff"/><rect x="10" y="15" width="1" height="1" fill="#fff"/><rect x="11" y="0" width="1" height="1" fill="#fff"/><rect x="11" y="14" width="1" height="1" fill="#fff"/><rect x="12" y="1" width="1" height="1" fill="#fff"/><rect x="12" y="15" width="1" height="1" fill="#fff"/><rect x="13" y="0" width="1" height="1" fill="#fff"/><rect x="13" y="14" width="1" height="1" fill="#fff"/><rect x="14" y="1" width="1" height="1" fill="#fff"/><rect x="14" y="15" width="1" height="1" fill="#fff"/><rect x="15" y="0" width="1" height="1" fill="#fff"/><rect x="15" y="14" width="1" height="1" fill="#fff"/></g><path d="M4.5 12.5V5.5M3 12.5h3M3.5 5h1.5" stroke="#fff" stroke-width="1.4" fill="none"/><path d="M5 6.5Q7.5 4.2 10.5 4.8Q13.2 5.6 12.6 8.6Q12 11.6 9 11.6H14" stroke="#fff" stroke-width="1.4" fill="none"/></svg>
<div class="a t0" style="left:26px;top:8px;color:#DCE4F8;font-weight:bold;font-size:13px;letter-spacing:-0.3px">Name/Group</div>
<div class="ib" style="left:593px;top:6px"><svg class="a" style="left:3px;top:8px" width="6" height="3"><rect width="6" height="2" fill="#E6EAF8"/></svg></div><div class="ib" style="left:611px;top:6px"><svg class="a" style="left:3px;top:3px" width="8" height="8" viewBox="0 0 8 8"><path d="M0.75 1.5H7.25V7.25H0.75Z" fill="none" stroke="#E6EAF8" stroke-width="1.5"/><rect x="0" y="0" width="8" height="2" fill="#E6EAF8"/></svg></div><div class="ib cl" style="left:629px;top:6px"><svg class="a" style="left:3px;top:3px" width="8" height="8" viewBox="0 0 8 8"><path d="M1 1L7 7M7 1L1 7" stroke="#E6EAF8" stroke-width="2"/></svg></div>
</div>
<div class="win" style="left:466px;top:347px;width:323px;height:295px;background:#0050F0;border-radius:6px 6px 0 0">
<div class="a" style="left:0px;top:0px;width:4px;height:295px;background:linear-gradient(90deg,#0838D8 0 1px,#1060F8 1px 2px,#0850F0 2px 3px,#0044DC 3px 4px)"></div>
<div class="a" style="left:319px;top:0px;width:4px;height:295px;background:linear-gradient(90deg,#0050F0 0 2px,#0020B0 2px 4px)"></div>
<div class="a" style="left:0px;top:291px;width:323px;height:4px;background:linear-gradient(#0050F0 0 2px,#0020B0 2px 4px)"></div>
<div class="a" style="left:0px;top:0px;width:323px;height:25px;border-radius:6px 6px 0 0;background:linear-gradient(#0050E0 0px,#3C8AFF 1px,#2A84FF 2px,#1272FF 3px,#0A62F2 5px,#0056E0 7px,#0056E0 10px,#005CEC 13px,#0066FA 16px,#0068FF 21px,#005AE8 23px,#0030C4 24px,#0028C0 25px)"></div>
<div class="a" style="left:4px;top:25px;width:315px;height:266px;background:#EDE6D5;overflow:hidden">
<div class="inner" style="left:-470px;top:-372px">
<div class="a" style="left:474px;top:382px;width:237px;height:39px;border:1px solid #D0D0BF;border-radius:4px"></div>
<div class="a" style="left:482px;top:388px;width:129px;height:25px;background:#fff;border:1px solid #7F9DB9"></div>
<div class="a t0" style="left:485px;top:392px;font-size:17px">Gwendolyn</div>
<div class="btn" style="left:619px;top:389px;width:83px;height:23px;padding-top:5px;font-size:11px;box-shadow:inset 0 1px 0 #CEE7FF,inset 0 -1px 0 #6F9AE8,inset 1px 0 0 #B0CCF8,inset -1px 0 0 #7BA2E8,inset 0 2px 0 #BCD4F6,inset 0 -2px 0 #89ADE4">Add</div>
<div class="a" style="left:718px;top:382px;width:100px;height:39px;border:1px solid #D0D0BF;border-radius:4px"></div>
<div class="gt" style="left:726px;top:377px;letter-spacing:-0.5px">Comment for</div>
<div class="a" style="left:726px;top:392px;width:100px;height:21px;background:#fff;border:1px solid #7F9DB9"></div>
<div class="a" style="left:474px;top:431px;width:101px;height:153px;border:1px solid #D0D0BF;border-radius:4px"></div>
<div class="gt" style="left:481px;top:425px">Favorite</div>
<div class="btn" style="left:483px;top:445px;width:83px;height:23px;padding-top:5px;font-size:11px;">Move Up</div>
<div class="btn" style="left:483px;top:477px;width:83px;height:23px;padding-top:5px;font-size:11px;">Move Down</div>
<div class="btn" style="left:483px;top:521px;width:83px;height:23px;padding-top:5px;font-size:11px;">Delete</div>
<div class="btn" style="left:483px;top:553px;width:83px;height:23px;padding-top:5px;font-size:11px;">Show</div>
<div class="a" style="left:474px;top:594px;width:101px;height:60px;border:1px solid #D0D0BF;border-radius:4px"></div>
<div class="gt" style="left:481px;top:588px">All favorites</div>
<div class="btn" style="left:483px;top:609px;width:83px;height:23px;padding-top:5px;font-size:11px;">Change...</div>
<div class="a" style="left:583px;top:431px;width:198px;height:204px;border:1px solid #D0D0BF;border-radius:4px"></div>
<div class="gt" style="left:590px;top:425px">Favorites</div>
<div class="a" style="left:591px;top:440px;width:183px;height:188px;background:#fff;border-top:1px solid #A39C91;border-left:1px solid #A39C91;box-shadow:inset 1px 1px 0 #716F64;border-right:1px solid #fff;border-bottom:1px solid #fff"></div>
<div class="a" style="left:593px;top:442px;width:60px;height:17px;background:#EDE6D5;border-top:1px solid #fff;border-left:1px solid #fff;border-bottom:2px solid #716F64;border-right:1px solid #ACA899"></div>
<div class="a t0" style="left:599px;top:446px;font-size:11px">Name</div>
<div class="a" style="left:653px;top:442px;width:120px;height:17px;background:#EDE6D5;border-top:1px solid #fff;border-left:1px solid #fff;border-bottom:2px solid #716F64;border-right:1px solid #ACA899"></div>
<div class="a t0" style="left:659px;top:446px;font-size:11px">Comment</div>
<div class="a" style="left:593px;top:473px;width:180px;height:1px;background:#ECE6D5"></div>
<div class="a" style="left:593px;top:487px;width:180px;height:1px;background:#ECE6D5"></div>
<div class="a" style="left:593px;top:501px;width:180px;height:1px;background:#ECE6D5"></div>
<div class="a" style="left:593px;top:515px;width:180px;height:1px;background:#ECE6D5"></div>
<div class="a" style="left:593px;top:529px;width:180px;height:1px;background:#ECE6D5"></div>
<div class="a" style="left:593px;top:543px;width:180px;height:1px;background:#ECE6D5"></div>
<div class="a" style="left:593px;top:557px;width:180px;height:1px;background:#ECE6D5"></div>
<div class="a" style="left:593px;top:571px;width:180px;height:1px;background:#ECE6D5"></div>
<div class="a" style="left:593px;top:585px;width:180px;height:1px;background:#ECE6D5"></div>
<div class="a" style="left:593px;top:599px;width:180px;height:1px;background:#ECE6D5"></div>
<div class="a" style="left:593px;top:613px;width:180px;height:1px;background:#ECE6D5"></div>
<div class="a" style="left:593px;top:627px;width:180px;height:1px;background:#ECE6D5"></div>
<div class="a" style="left:652px;top:459px;width:1px;height:150px;background:#ECE6D5"></div>
<div class="a" style="left:594px;top:460px;width:178px;height:13px;background:#316AC5"></div>
<div class="a" style="left:594px;top:460px;width:59px;height:13px;border:1px dotted #fff;background:#316AC5"></div>
<div class="a t0" style="left:596px;top:462px;color:#fff;font-size:11px">Gwendolyn</div>
<div class="a t0" style="left:596px;top:476px;color:#EE5B98;font-size:11px">Kunigunde</div>
<div class="a t0" style="left:596px;top:490px;color:#EE5B98;font-size:11px">Jennifer</div>
<div class="a" style="left:593px;top:610px;width:179px;height:16px;background:linear-gradient(#F3F1EA,#FEFEFB 50%,#F0EEE6)"></div>
<div class="a" style="left:593px;top:611px;width:15px;height:15px;border:1px solid #fff;border-radius:2px;background:linear-gradient(135deg,#D5E1FD,#BBCEF9 60%,#B0C5F6)"></div>
<div class="a" style="left:756px;top:611px;width:15px;height:15px;border:1px solid #fff;border-radius:2px;background:linear-gradient(135deg,#D5E1FD,#BBCEF9 60%,#B0C5F6)"></div>
<svg class="a" style="left:597px;top:614px" width="6" height="9" viewBox="0 0 6 9"><path d="M5 1L1.5 4.5L5 8" fill="none" stroke="#3D4F7A" stroke-width="2.4"/></svg>
<svg class="a" style="left:761px;top:614px" width="6" height="9" viewBox="0 0 6 9"><path d="M1 1L4.5 4.5L1 8" fill="none" stroke="#3D4F7A" stroke-width="2.4"/></svg>
<div class="a" style="left:609px;top:611px;width:145px;height:15px;border:1px solid #fff;border-radius:2px;background:linear-gradient(#C9D8FC,#BBCEF9 60%,#AEC3F4)"></div>
<div class="a" style="left:679px;top:615px;width:1px;height:7px;background:#8DA8EA"></div>
<div class="a" style="left:681px;top:615px;width:1px;height:7px;background:#8DA8EA"></div>
<div class="a" style="left:683px;top:615px;width:1px;height:7px;background:#8DA8EA"></div>
<div class="a" style="left:685px;top:615px;width:1px;height:7px;background:#8DA8EA"></div>
<svg class="a" style="left:772px;top:626px" width="13" height="13" viewBox="0 0 13 13"><path d="M12 1L1 12M12 5L5 12M12 9L9 12" stroke="#C6C2B0" stroke-width="1.5"/><path d="M12.5 2.5L2.5 12.5M12.5 6.5L6.5 12.5M12.5 10.5L10.5 12.5" stroke="#fff" stroke-width="0.8"/></svg>
</div></div>
<svg class="a" style="left:6px;top:6px" width="16" height="16" viewBox="0 0 16 16"><rect width="16" height="16" fill="#C0C0C0"/><path d="M10.5 13 L6 8 Q4 5 7 3 Q9.5 2 10.5 4 Q11.5 2 14 3 Q16.5 5 14.5 8 Z" fill="#0010F0" transform="translate(-0.5,-1.5)"/><path d="M6.5 15 L1.2 9 Q-0.5 6 2.5 4.5 Q5 3.5 6.5 5.5 Q8 3.5 10.5 4.5 Q13.5 6 11.8 9 Z" fill="#F00000"/></svg>
<div class="a t0" style="left:26px;top:8px;color:#fff;font-weight:bold;font-size:13px;letter-spacing:-0.3px;text-shadow:1px 1px 0 #0A2A8A">Favorites</div>
<div class="xb" style="left:265px;top:6px"><svg class="a" style="left:3px;top:8px" width="6" height="3"><rect width="6" height="2" fill="#fff"/></svg></div><div class="xb" style="left:283px;top:6px"><svg class="a" style="left:3px;top:3px" width="8" height="8" viewBox="0 0 8 8"><path d="M0.75 1.5H7.25V7.25H0.75Z" fill="none" stroke="#fff" stroke-width="1.5"/><rect x="0" y="0" width="8" height="2" fill="#fff"/></svg></div><div class="xb cl" style="left:301px;top:6px"><svg class="a" style="left:3px;top:3px" width="8" height="8" viewBox="0 0 8 8"><path d="M1 1L7 7M7 1L1 7" stroke="#fff" stroke-width="2"/></svg></div>
</div>
</body></html>
